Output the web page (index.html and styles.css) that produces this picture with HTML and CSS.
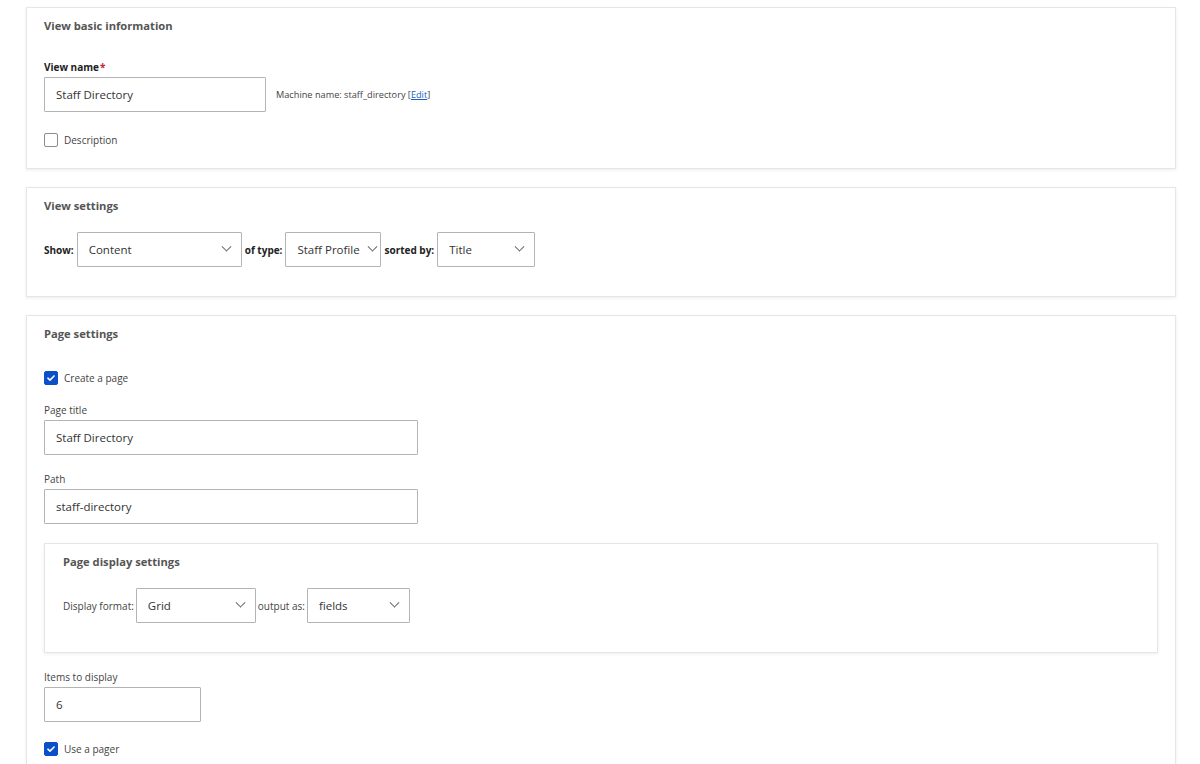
FILE: index.html
```html
<!DOCTYPE html>
<html lang="en">
<head>
<meta charset="utf-8">
<title>Add view</title>
<link rel="stylesheet" href="styles.css">
</head>
<body>
<main class="wizard">

  <section class="card">
    <h2 class="card-title">View basic information</h2>
    <div class="field field-name">
      <label class="label-strong">View name<span class="req">*</span></label>
      <div class="inline">
        <div class="input w-name">Staff Directory</div>
        <span class="machine">Machine name: staff_directory [<a href="#">Edit</a>]</span>
      </div>
    </div>
    <label class="check"><span class="box"></span>Description</label>
  </section>

  <section class="card card-settings">
    <h2 class="card-title">View settings</h2>
    <div class="inline row-selects">
      <span class="label-strong">Show:</span>
      <div class="select w-show">Content<i class="chev"></i></div>
      <span class="label-strong">of type:</span>
      <div class="select w-type">Staff Profile<i class="chev"></i></div>
      <span class="label-strong">sorted by:</span>
      <div class="select w-sort">Title<i class="chev"></i></div>
    </div>
  </section>

  <section class="card card-page">
    <h2 class="card-title">Page settings</h2>
    <label class="check check-first"><span class="box on"><svg viewBox="0 0 14 14"><path d="M3.4 7.2 5.8 9.5 10.6 4.6"/></svg></span>Create a page</label>

    <div class="field">
      <label class="label">Page title</label>
      <div class="input w-wide">Staff Directory</div>
    </div>
    <div class="field field-path">
      <label class="label">Path</label>
      <div class="input w-wide">staff-directory</div>
    </div>

    <section class="fieldset">
      <h3 class="card-title">Page display settings</h3>
      <div class="inline row-selects">
        <span class="label">Display format:</span>
        <div class="select w-format">Grid<i class="chev"></i></div>
        <span class="label">output as:</span>
        <div class="select w-output">fields<i class="chev"></i></div>
      </div>
    </section>

    <div class="field field-items">
      <label class="label">Items to display</label>
      <div class="input w-items">6</div>
    </div>
    <label class="check check-last"><span class="box on"><svg viewBox="0 0 14 14"><path d="M3.4 7.2 5.8 9.5 10.6 4.6"/></svg></span>Use a pager</label>
  </section>

</main>
</body>
</html>
```

FILE: styles.css
```css
* { box-sizing: border-box; }

html, body {
  margin: 0;
  background: #fff;
}

body {
  font-family: "Open Sans", "Noto Sans", sans-serif;
  color: #333;
  padding: 7px 24px 0 26px;
}

.wizard {
  display: flex;
  flex-direction: column;
  gap: 18px;
}

.card {
  border: 1px solid #e6e6e6;
  box-shadow: 0 1px 3px rgba(0, 0, 0, 0.08);
  padding: 8px 17px 21px;
  background: #fff;
}

.card-title {
  margin: 0;
  font-size: 11.2px;
  line-height: 19px;
  font-weight: 700;
  color: #555;
}

.field-name { margin-top: 25px; }

.label-strong {
  display: block;
  font-size: 10px;
  line-height: 14px;
  font-weight: 700;
  color: #222;
}

.req { color: #c1272d; margin-left: 1px; }

.label {
  display: block;
  font-size: 10px;
  line-height: 14px;
  color: #444;
}

.field > .label,
.field > .label-strong { margin-bottom: 3px; }

.inline {
  display: flex;
  align-items: center;
}

.input,
.select {
  height: 35px;
  border: 1px solid #b4b4b4;
  border-radius: 1px;
  padding: 0 11px;
  display: flex;
  align-items: center;
  font-size: 11.5px;
  color: #333;
  background: #fff;
}

.w-name { width: 222px; }
.w-wide { width: 374px; }
.w-items { width: 157px; }

.machine {
  margin-left: 10px;
  font-size: 9.2px;
  color: #444;
}
.machine a { color: #1a5fc4; }

.check {
  display: flex;
  align-items: center;
  gap: 6px;
  margin-top: 21px;
  font-size: 10px;
  line-height: 14px;
  color: #444;
}

.box {
  width: 14px;
  height: 14px;
  border: 1px solid #8c8c8c;
  border-radius: 2px;
  background: #fff;
  display: inline-flex;
}
.box.on {
  background: #0b4fc9;
  border-color: #0b4fc9;
}
.box svg {
  width: 12px;
  height: 12px;
  fill: none;
  stroke: #fff;
  stroke-width: 1.8;
  stroke-linecap: round;
  stroke-linejoin: round;
}

/* select boxes with a thin chevron */
.select {
  justify-content: space-between;
  margin: 0 3px;
}
.chev {
  width: 7px;
  height: 7px;
  border-right: 1.2px solid #666;
  border-bottom: 1.2px solid #666;
  transform: rotate(45deg) translate(-2px, -2px);
  flex: none;
}

.row-selects { margin-top: 17px; }
.card-settings { padding-bottom: 29px; }
.card-settings .label-strong { display: inline; }

.w-show { width: 165px; }
.w-type { width: 96px; padding-right: 4px; }
.w-sort { width: 98px; }

.check-first { margin-top: 28px; }
.card-page .field { margin-top: 18px; }
.card-page .field-path { margin-top: 17px; }

.fieldset {
  margin-top: 19px;
  border: 1px solid #e6e6e6;
  box-shadow: 0 1px 3px rgba(0, 0, 0, 0.08);
  padding: 8px 18px 29px;
}
.fieldset .select { margin: 0 2px; }
.w-format { width: 120px; }
.w-output { width: 103px; }

.card-page .field-items { margin-top: 17px; }
.check-last { margin-top: 20px; }
```
